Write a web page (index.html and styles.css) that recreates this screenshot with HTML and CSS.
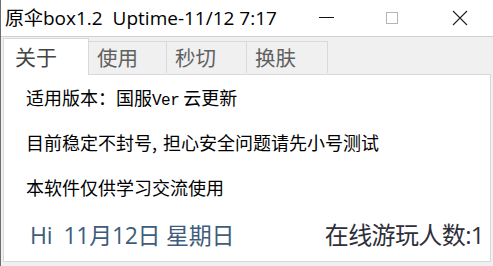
FILE: index.html
```
<!DOCTYPE html>
<html>
<head>
<meta charset="utf-8">
<link rel="stylesheet" href="styles.css">
</head>
<body>
<div class="window">
  <div class="titlebar">
    <div class="title">原伞box1.2&nbsp;&nbsp;Uptime-11/12 7:17</div>
    <div class="controls">
      <div class="ctl"><svg width="15" height="2" viewBox="0 0 15 2"><rect x="0" y="0" width="15" height="1" fill="#111"/></svg></div>
      <div class="ctl"><svg width="12" height="12" viewBox="0 0 12 12"><rect x="0.5" y="0.5" width="11" height="11" fill="none" stroke="#b4b4b4"/></svg></div>
      <div class="ctl"><svg width="16" height="16" viewBox="0 0 16 16"><path d="M1 1L15 15M15 1L1 15" stroke="#222" stroke-width="1.1" fill="none"/></svg></div>
    </div>
  </div>
  <div class="body">
    <div class="tabs">
      <div class="tab active">关于</div>
      <div class="tab">使用</div>
      <div class="tab">秒切</div>
      <div class="tab">换肤</div>
    </div>
    <div class="panel">
      <div class="line">适用版本：国服<span class="mono">Ver</span> 云更新</div>
      <div class="line">目前稳定不封号<span class="comma">,</span>担心安全问题请先小号测试</div>
      <div class="line">本软件仅供学习交流使用</div>
      <div class="footer">
        <div class="hi">Hi&nbsp;&nbsp;11月12日 星期日</div>
        <div class="online">在线游玩人数:1</div>
      </div>
    </div>
  </div>
</div>
</body>
</html>
```
FILE: styles.css
```
html, body {
  margin: 0;
  padding: 0;
}
body {
  width: 493px;
  height: 266px;
  overflow: hidden;
  background: #f0f0f0;
  font-family: "Open Sans", "Noto Sans CJK SC", sans-serif;
}
.window {
  width: 493px;
  height: 266px;
  display: flex;
  flex-direction: column;
  border-left: 1px solid #6e6e6e;
  box-sizing: border-box;
}
.titlebar {
  height: 36px;
  background: #fff;
  border-bottom: 1px solid #d0d0d0;
  display: flex;
  align-items: center;
  justify-content: space-between;
}
.title {
  padding-left: 4px;
  font-size: 19px;
  color: #000;
  letter-spacing: 0;
  padding-bottom: 2px;
  white-space: nowrap;
}
.controls {
  display: flex;
  height: 100%;
}
.ctl {
  width: 70px;
  display: flex;
  align-items: center;
  justify-content: center;
}
.ctl:nth-child(1) { width: 62px; }
.ctl:nth-child(3) { width: 66px; }
.body {
  flex: 1;
  display: flex;
  flex-direction: column;
  padding: 0 2px 4px 2px;
}
.tabs {
  display: flex;
  align-items: flex-end;
  height: 37px;
  position: relative;
  z-index: 1;
}
.tab {
  width: 80px;
  height: 32px;
  box-sizing: border-box;
  background: #f0f0f0;
  border: 1px solid #d9d9d9;
  border-bottom: none;
  border-left: none;
  font-family: "Noto Sans CJK SC", sans-serif;
  font-size: 20.5px;
  color: #606060;
  padding-left: 8px;
  line-height: 30px;
  margin-bottom: 1px;
}
.tab.active {
  width: 86px;
  height: 37px;
  background: #fff;
  border: 1px solid #d9d9d9;
  border-bottom: none;
  margin-bottom: -1px;
  padding-left: 11px;
  line-height: 34px;
  font-size: 21px;
  color: #444;
}
.tab.active + .tab { width: 78px; }
.tab:last-child { width: 81px; }
.panel {
  flex: 1;
  background: #fff;
  border: 1px solid #d9d9d9;
  padding: 11px 6px 0 22px;
  display: flex;
  flex-direction: column;
  font-family: "Noto Sans CJK SC", sans-serif;
  font-size: 18px;
  color: #000;
}
.line {
  height: 45px;
  line-height: 22px;
  white-space: nowrap;
}
.mono {
  font-family: "Liberation Mono", monospace;
  font-size: 16px;
  letter-spacing: -0.5px;
}
.comma {
  margin-right: 6px;
}
.footer {
  display: flex;
  justify-content: space-between;
  align-items: center;
  margin-top: -5px;
  margin-left: 4px;
}
.hi {
  font-family: "Open Sans", "Noto Sans CJK SC", sans-serif;
  font-size: 23px;
  color: #3e5c7c;
  letter-spacing: -0.3px;
  white-space: nowrap;
}
.online {
  font-family: "Open Sans", "Noto Sans CJK SC", sans-serif;
  font-size: 24px;
  color: #2f2f3a;
  letter-spacing: -0.6px;
  white-space: nowrap;
}
```
